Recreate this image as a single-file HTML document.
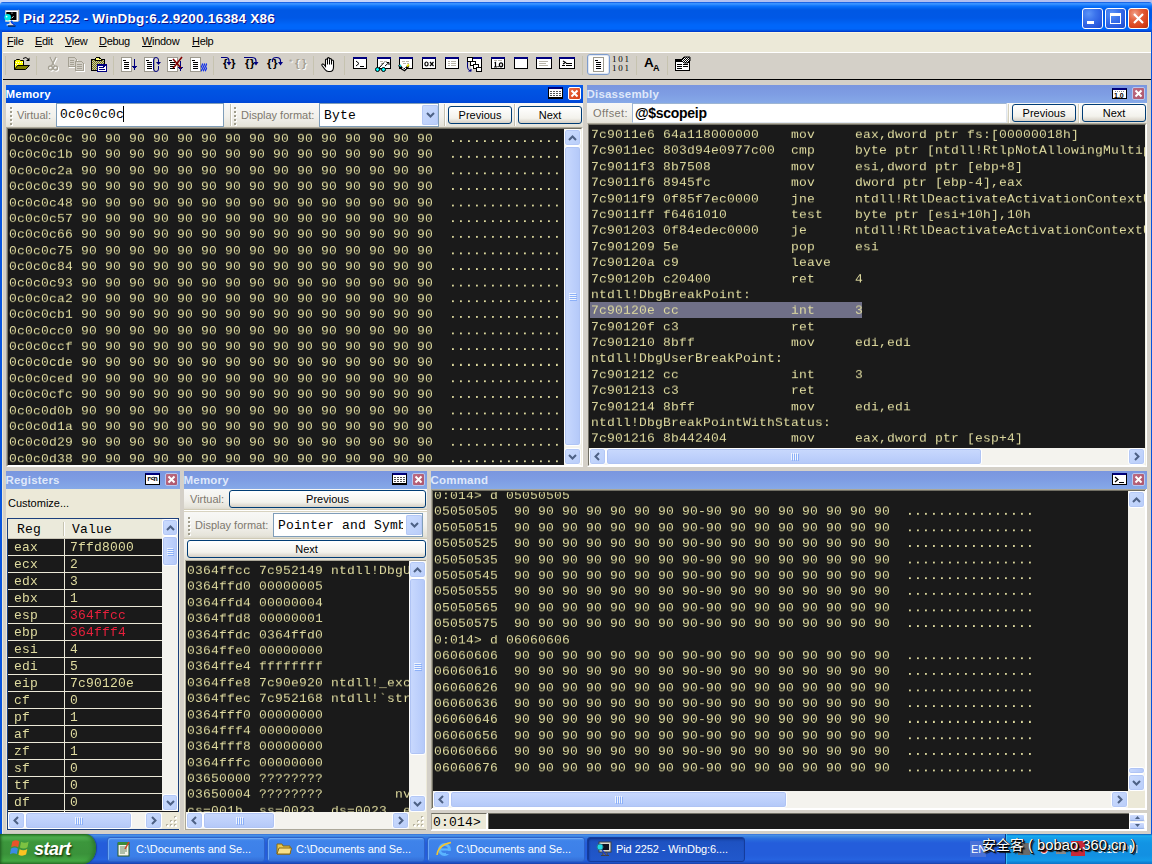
<!DOCTYPE html>
<html lang="en"><head><meta charset="utf-8"><title>Pid 2252 - WinDbg:6.2.9200.16384 X86</title>
<style>
*{box-sizing:border-box}
html,body{margin:0;padding:0}
body{width:1152px;height:864px;overflow:hidden;background:#ece9d8;position:relative;font-family:"Liberation Sans",sans-serif;font-size:11px;color:#000}
.abs{position:absolute}
.mono{font-family:"Liberation Mono",monospace;font-size:13px;line-height:17.3913px;white-space:pre;color:#e0dca0;letter-spacing:0.2px;transform:scaleY(0.92);transform-origin:0 0}
.dark{position:absolute;background:#1a1a1a;overflow:hidden}
.dark .t{position:absolute;left:0;top:0;will-change:transform}
.ptitle{position:absolute;height:18px;color:#fff;font-weight:bold;font-size:11.5px;line-height:18px;white-space:nowrap;letter-spacing:0.2px}
.ptitle.act{background:linear-gradient(#0a5cec,#0054e3 30%,#004ee0 80%,#0046d4)}
.ptitle.in{background:linear-gradient(#7a96df,#7e9de3 50%,#86a9e8);color:#dfe8fa}
.ptitle span{position:absolute;left:-0.5px;top:0}
.lbl{position:absolute;color:#7d786e;font-size:11px;line-height:14px;white-space:nowrap}
.btn{position:absolute;border:1px solid #003c74;border-radius:3px;background:linear-gradient(#fff,#f3f2ec 70%,#d6d0c5);text-align:center;font-size:11px;white-space:nowrap;color:#000}
.inp{position:absolute;border:1px solid #7f9db9;background:#fff}
.sb{position:absolute;background:#f4f3ee}
.sbb{position:absolute;width:17px;height:17px;border:1px solid #fff;border-radius:3px;background:linear-gradient(135deg,#cbdcfe,#b9cdf9);box-shadow:inset 0 0 0 1px #b4c8f6}
.sbt{position:absolute;border:1px solid #fff;border-radius:3px;background:linear-gradient(90deg,#c9d9fd,#bccffb 60%,#b3c8f8);box-shadow:inset 0 0 0 1px #b0c4f4}
.sbt.h{background:linear-gradient(#c9d9fd,#bccffb 60%,#b3c8f8)}
svg{position:absolute;overflow:visible}
.grip{position:absolute;left:0;top:0;width:2px;height:100%;}
</style></head>
<body>
<div class="abs" style="left:0;top:0;width:1152px;height:10px;background:linear-gradient(90deg,#ccd8fa,#c4d2f8 40%,#aebcee 70%,#b4c0f0)"></div>
<div class="abs" id="titlebar" style="left:0;top:2px;width:1152px;height:30px;border-radius:3px 3px 0 0;background:linear-gradient(#0a50dc 0,#3a93ff 1.500px,#2f8bff 2.500px,#0c74fc 4px,#0264f0 6px,#0058e4 8px,#0058e6 16px,#005eee 19px,#0066fa 23px,#0066fa 27px,#0052e2 28.500px,#0032c4 30px)"></div>
<div class="abs" style="left:23px;top:9px;font-size:13.5px;font-weight:bold;color:#fff;line-height:20px;white-space:nowrap;text-shadow:1px 1px #0f1089;letter-spacing:0.23px" id="wtitle">Pid 2252 - WinDbg:6.2.9200.16384 X86</div>
<svg width="18" height="18" style="left:3px;top:9px" viewBox="0 0 18 18"><path d="M2.500 1.500H15L16 1V11.500L15 12.500H2.500Z" fill="#fff" stroke="#d8d0c0" stroke-width="0.600"/><path d="M15 1.500L16 1V11.500L15 12.500Z" fill="#b8b0a0"/><rect x="3.300" y="3" width="10.200" height="8" fill="#000"/><rect x="8.500" y="3.600" width="1" height="1" fill="#fff"/><path d="M8.500 9.300L10.500 7.300" stroke="#fff" stroke-width="1"/><path d="M6.500 12.500H8.500V14.500L12 15.500V16.500H3.500V15.500L6.500 14.500Z" fill="#e8e4dc"/><path d="M5 17H12.500" stroke="#000" stroke-width="1"/><circle cx="4.700" cy="8.200" r="3.300" fill="#00e8e8"/><circle cx="3.600" cy="7.600" r="0.900" fill="#fff"/><path d="M8 12L12 16" stroke="#0020e0" stroke-width="1.800"/><path d="M8.300 11.700L12.300 15.700" stroke="#20d8f0" stroke-width="0.700"/></svg>
<div class="abs" style="left:1082px;top:8px;width:21px;height:21px;border:1px solid #fff;border-radius:3px;background:radial-gradient(circle at 30% 25%,#5c94f8 0,#3c74ec 35%,#2a5ce0 70%,#1c48c8 100%)"><div class="abs" style="left:4px;top:12px;width:7px;height:3px;background:#fff"></div></div>
<div class="abs" style="left:1105px;top:8px;width:21px;height:21px;border:1px solid #fff;border-radius:3px;background:radial-gradient(circle at 30% 25%,#5c94f8 0,#3c74ec 35%,#2a5ce0 70%,#1c48c8 100%)"><div class="abs" style="left:4px;top:4px;width:11px;height:11px;border:1px solid #fff;border-top-width:3px"></div></div>
<div class="abs" style="left:1128px;top:8px;width:21px;height:21px;border:1px solid #fff;border-radius:3px;background:radial-gradient(circle at 30% 25%,#f0a088 0,#e4603c 35%,#d8421c 70%,#b8300c 100%)"><svg width="11" height="11" style="left:4px;top:4px" viewBox="0 0 11 11"><path d="M1 1L10 10M10 1L1 10" stroke="#fff" stroke-width="2.2" fill="none"/></svg></div>
<div class="abs" style="left:0;top:30px;width:2px;height:804px;background:#0855dd"></div>
<div class="abs" style="left:1151px;top:30px;width:1px;height:804px;background:#0855dd"></div>
<div class="abs" style="left:2px;top:32px;width:1149px;height:20px;background:#ece9d8;border-top:1px solid #fdf6de"></div>
<div class="abs" style="left:7px;top:34px;font-size:11px;line-height:14px;white-space:nowrap;letter-spacing:-0.3px"><u>F</u>ile</div>
<div class="abs" style="left:35px;top:34px;font-size:11px;line-height:14px;white-space:nowrap;letter-spacing:-0.3px"><u>E</u>dit</div>
<div class="abs" style="left:65px;top:34px;font-size:11px;line-height:14px;white-space:nowrap;letter-spacing:-0.3px"><u>V</u>iew</div>
<div class="abs" style="left:99px;top:34px;font-size:11px;line-height:14px;white-space:nowrap;letter-spacing:-0.3px"><u>D</u>ebug</div>
<div class="abs" style="left:142px;top:34px;font-size:11px;line-height:14px;white-space:nowrap;letter-spacing:-0.3px"><u>W</u>indow</div>
<div class="abs" style="left:192px;top:34px;font-size:11px;line-height:14px;white-space:nowrap;letter-spacing:-0.3px"><u>H</u>elp</div>
<div class="abs" style="left:2px;top:52px;width:1149px;height:1px;background:#fff"></div>
<div class="abs" style="left:2px;top:53px;width:1149px;height:26px;background:#d4d0c8"></div>
<div class="abs" style="left:2px;top:79px;width:1149px;height:1px;background:#000"></div>
<div class="abs" style="left:5px;top:56px;width:1px;height:19px;background:#c6c3b0"></div>
<svg width="18" height="15" style="left:13px;top:56px" viewBox="0 0 18 15"><path d="M1.500 13.500V4.500H2.500L3.500 3.500H6.500L7.500 4.500H10.500V9" fill="#ffff00" stroke="#000" stroke-width="1"/><path d="M3 6.500H10M2 8.500H5" stroke="#fff" stroke-dasharray="1 1"/><path d="M1.500 13.500L4.500 9.500H16.500L12.500 13.500Z" fill="#808000" stroke="#000" stroke-width="1"/><path d="M10 2.500Q13 0 15.500 3.500" fill="none" stroke="#000" stroke-width="1"/><path d="M16.500 1.500V5H13Z" fill="#000"/></svg>
<div class="abs" style="left:36px;top:56px;width:1px;height:19px;background:#c6c3b0"></div>
<svg width="13" height="15" style="left:47px;top:57px" viewBox="0 0 13 15"><g fill="none" stroke="#fff" stroke-width="1.3" transform="translate(1,1)"><path d="M3 0L7.5 9M9 0L4.5 9"/><circle cx="3.5" cy="11" r="2"/><circle cx="8.5" cy="11" r="2"/></g><g fill="none" stroke="#a5a194" stroke-width="1.3"><path d="M3 0L7.5 9M9 0L4.5 9"/><circle cx="3.5" cy="11" r="2"/><circle cx="8.5" cy="11" r="2"/></g></svg>
<svg width="18" height="16" style="left:68px;top:57px" viewBox="0 0 18 16" shape-rendering="crispEdges"><g transform="translate(1,1)" fill="none" stroke="#fff"><path d="M0.5 0.5H6.5L8.5 2.5V9.5H0.5Z"/><path d="M7.5 4.5H13.5L15.5 6.5V13.5H7.5Z"/></g><g fill="#d4d0c8" stroke="#a5a194"><path d="M0.5 0.5H6.5L8.5 2.5V9.5H0.5Z"/><path d="M7.5 4.5H13.5L15.5 6.5V13.5H7.5Z"/><path d="M2 3.5H6M2 5.5H6M2 7.5H6M9 7.5H14M9 9.5H14M9 11.5H14" fill="none"/></g></svg>
<svg width="17" height="16" style="left:91px;top:56px" viewBox="0 0 17 16" shape-rendering="crispEdges"><rect x="0.500" y="3.500" width="13" height="11" fill="#808000" stroke="#000"/><rect x="1" y="4" width="12" height="10" fill="url(#chk)"/><path d="M4 4.500V3L6 1.500H8L10 3V4.500Z" fill="#ffff80" stroke="#000" stroke-width="1"/><rect x="6.500" y="8.500" width="9" height="7" fill="#fff" stroke="#000080" stroke-width="1"/><rect x="6" y="8" width="10" height="1.500" fill="#000080"/><path d="M8 11.500H13M8 13.500H14" stroke="#000080"/><rect x="12" y="9" width="2" height="2" fill="#000080"/></svg>
<div class="abs" style="left:113px;top:56px;width:1px;height:19px;background:#c6c3b0"></div>
<svg width="17" height="15" style="left:121px;top:57px" viewBox="0 0 17 15" shape-rendering="crispEdges"><rect x="0.5" y="0.5" width="10" height="14" fill="#fff" stroke="#9d9a8f"/><path d="M2 3.5H5M3 5.5H8M3 7.5H8M3 9.5H8M3 11.5H8" stroke="#000" stroke-width="1"/><path d="M13.5 2V12" stroke="#000080" stroke-width="1"/><path d="M11 9H16L13.5 13Z" fill="#000080"/></svg>
<svg width="18" height="17" style="left:144px;top:56px" viewBox="0 0 18 17" shape-rendering="crispEdges"><g transform="translate(0,1)"><rect x="0.5" y="0.5" width="10" height="14" fill="#fff" stroke="#9d9a8f"/><path d="M2 3.5H5M3 5.5H8M3 7.5H8M3 9.5H8M3 11.5H8" stroke="#000" stroke-width="1"/></g><g shape-rendering="auto"><path d="M12 1.500Q14.500 1.500 14.500 4V6M14.500 10V13Q14.500 15.500 12 15.500Q9.500 15.500 9.500 13V4Q9.500 1.500 12 1.500" fill="none" stroke="#000080" stroke-width="1"/><path d="M12 6H17L14.500 9Z" fill="#000080"/></g></svg>
<svg width="18" height="16" style="left:167px;top:56px" viewBox="0 0 18 16" shape-rendering="crispEdges"><g transform="translate(0,1)"><rect x="0.5" y="0.5" width="10" height="14" fill="#fff" stroke="#9d9a8f"/><path d="M2 3.5H5M3 5.5H8M3 7.5H8M3 9.5H8M3 11.5H8" stroke="#000" stroke-width="1"/></g><path d="M13.5 5V12" stroke="#000080"/><path d="M11 11H16L13.500 15Z" fill="#000080"/><path d="M6 3L14 12M15 1L8 10L6 12" fill="none" stroke="#800000" stroke-width="1.600" shape-rendering="auto"/></svg>
<svg width="18" height="15" style="left:190px;top:57px" viewBox="0 0 18 15" shape-rendering="crispEdges"><rect x="0.5" y="0.5" width="10" height="14" fill="#fff" stroke="#9d9a8f"/><path d="M2 3.5H5M3 5.5H8M3 7.5H8M3 9.5H8M3 11.5H8" stroke="#000" stroke-width="1"/><g fill="none" stroke="#1030e8" stroke-width="1.300" shape-rendering="auto"><path d="M12 6.500q1 1 0 2t0 2t0 2t0 1.500"/><path d="M14 6.500q1 1 0 2t0 2t0 2t0 1.500"/><path d="M16 6.500q1 1 0 2t0 2t0 2t0 1.500"/></g></svg>
<div class="abs" style="left:213px;top:56px;width:1px;height:19px;background:#c6c3b0"></div>
<div class="abs" style="left:223px;top:57px;font-family:'Liberation Sans',sans-serif;font-weight:bold;font-size:11.5px;line-height:13px;color:#000">{</div><div class="abs" style="left:231px;top:57px;font-family:'Liberation Sans',sans-serif;font-weight:bold;font-size:11.5px;line-height:13px;color:#000">}</div>
<svg width="14" height="12" style="left:220px;top:56px" viewBox="0 0 14 12"><path d="M1 1.500H6Q9 1.500 9 5V8" fill="none" stroke="#000080" stroke-width="1.2"/><path d="M6.5 6H11.5L9 9.500Z" fill="#000080"/></svg>
<div class="abs" style="left:245px;top:57px;font-family:'Liberation Sans',sans-serif;font-weight:bold;font-size:11.5px;line-height:13px;color:#000">{</div><div class="abs" style="left:250px;top:57px;font-family:'Liberation Sans',sans-serif;font-weight:bold;font-size:11.5px;line-height:13px;color:#000">}</div>
<svg width="18" height="12" style="left:243px;top:56px" viewBox="0 0 18 12"><path d="M1 1.500H9Q13 1.500 13 5V8" fill="none" stroke="#000080" stroke-width="1.2"/><path d="M10.5 6H15.5L13 9.500Z" fill="#000080"/></svg>
<div class="abs" style="left:267px;top:57px;font-family:'Liberation Sans',sans-serif;font-weight:bold;font-size:11.5px;line-height:13px;color:#000">{</div><div class="abs" style="left:273px;top:57px;font-family:'Liberation Sans',sans-serif;font-weight:bold;font-size:11.5px;line-height:13px;color:#000">}</div>
<svg width="16" height="12" style="left:268px;top:56px" viewBox="0 0 16 12"><path d="M4.500 6V4.500Q4.500 1.500 8.500 1.500Q12.500 1.500 12.500 5V8" fill="none" stroke="#000080" stroke-width="1.2"/><path d="M10 6H15L12.500 9.500Z" fill="#000080"/></svg>
<div class="abs" style="left:290px;top:58px;font-size:9px;line-height:10px;color:#fff">*</div><div class="abs" style="left:289px;top:57px;font-size:9px;line-height:10px;color:#a5a194">*</div><div class="abs" style="left:296px;top:58px;font-family:'Liberation Sans',sans-serif;font-weight:bold;font-size:11.5px;line-height:13px;color:#fff">{</div><div class="abs" style="left:303px;top:58px;font-family:'Liberation Sans',sans-serif;font-weight:bold;font-size:11.5px;line-height:13px;color:#fff">}</div><div class="abs" style="left:295px;top:57px;font-family:'Liberation Sans',sans-serif;font-weight:bold;font-size:11.5px;line-height:13px;color:#a5a194">{</div><div class="abs" style="left:302px;top:57px;font-family:'Liberation Sans',sans-serif;font-weight:bold;font-size:11.5px;line-height:13px;color:#a5a194">}</div>
<div class="abs" style="left:313px;top:56px;width:1px;height:19px;background:#c6c3b0"></div>
<svg width="16" height="16" style="left:321px;top:57px" viewBox="0 0 16 16"><path d="M4.500 9.500V3.200Q4.500 2 5.500 2Q6.500 2 6.500 3.200V1.700Q6.500 0.600 7.500 0.600Q8.500 0.600 8.500 1.700V2.600Q8.500 1.600 9.500 1.600Q10.500 1.600 10.500 2.700V4Q10.500 3 11.500 3Q12.500 3 12.500 4.200V10Q12.500 14.500 9 14.500H7.500Q5.500 14.500 4 12.500L1 8.500Q0.500 7.500 1.500 7Q2.500 6.800 3.200 7.800Z" fill="#fff" stroke="#000" stroke-width="1.1"/><path d="M6.500 3V7.500M8.500 2.500V7.500M10.500 4V7.500" stroke="#000" stroke-width="1" fill="none"/></svg>
<div class="abs" style="left:344px;top:56px;width:1px;height:19px;background:#c6c3b0"></div>
<svg width="18" height="18" style="left:353px;top:57px" viewBox="0 0 18 18" shape-rendering="crispEdges"><rect x="0" y="0" width="14" height="12" fill="#000"/><rect x="1" y="2" width="12" height="9" fill="#fff"/><rect x="0" y="0" width="14" height="2" fill="#000080"/><path d="M3 4L6 6.5L3 9" fill="none" stroke="#000" stroke-width="1" shape-rendering="auto"/><path d="M7 9.500H11" stroke="#000"/></svg>
<svg width="18" height="18" style="left:377px;top:57px" viewBox="0 0 18 18" shape-rendering="crispEdges"><rect x="0" y="0" width="14" height="12" fill="#000"/><rect x="1" y="2" width="12" height="9" fill="#fff"/><rect x="0" y="0" width="14" height="2" fill="#000080"/><path d="M3 4.500H6M7 4.500H10M4 6.500H7" stroke="#b8b4a8"/><path d="M2 11L7 5.500M8 9L12 5.500M12 5.500V8M12 5.500H9.5" fill="none" stroke="#000" shape-rendering="auto"/><g shape-rendering="auto"><circle cx="0.500" cy="12.500" r="2" fill="#00ffff" stroke="#000"/><circle cx="6.500" cy="12.500" r="2" fill="#00ffff" stroke="#000"/><path d="M2.500 12H4.500" stroke="#000"/></g></svg>
<svg width="18" height="18" style="left:399px;top:57px" viewBox="0 0 18 18" shape-rendering="crispEdges"><rect x="0" y="0" width="14" height="12" fill="#000"/><rect x="1" y="2" width="12" height="9" fill="#fff"/><rect x="0" y="0" width="14" height="2" fill="#000080"/><path d="M3 4.500H6M7 4.500H10M4 6.500H7M8 6.500H10" stroke="#b8b4a8"/><g shape-rendering="auto"><path d="M0 8L3 11.500L5.500 13L9.500 9" fill="none" stroke="#000" stroke-width="2.4"/><path d="M0.500 8L2 9.5" stroke="#00e0e0" stroke-width="1.600"/><path d="M8 9.500L10 7.500" stroke="#e8e000" stroke-width="1.800"/><path d="M3 11L5.500 12.500L7 11" stroke="#fff" stroke-width="1" fill="none"/></g></svg>
<svg width="18" height="18" style="left:422px;top:57px" viewBox="0 0 18 18" shape-rendering="crispEdges"><rect x="0" y="0" width="14" height="12" fill="#000"/><rect x="1" y="2" width="12" height="9" fill="#fff"/><rect x="0" y="0" width="14" height="2" fill="#000080"/><g shape-rendering="auto" fill="none" stroke="#000" stroke-width="1.2"><ellipse cx="4.500" cy="7" rx="1.600" ry="2"/><path d="M8 5L11.500 9M11.500 5L8 9"/></g></svg>
<svg width="18" height="18" style="left:445px;top:57px" viewBox="0 0 18 18" shape-rendering="crispEdges"><rect x="0" y="0" width="14" height="12" fill="#000"/><rect x="1" y="2" width="12" height="9" fill="#fff"/><rect x="0" y="0" width="14" height="2" fill="#000080"/><path d="M3 4.500H11M3 6.500H11M3 8.500H11" stroke="#b8b4a8"/><path d="M5.500 4V9" stroke="#fff"/></svg>
<svg width="18" height="17" style="left:466px;top:56px" viewBox="0 0 18 17" shape-rendering="crispEdges"><rect x="5" y="1" width="11" height="2" fill="#000080"/><rect x="5" y="3" width="11" height="10" fill="#fff"/><path d="M15.500 3V12" stroke="#000"/><rect x="1.500" y="1.500" width="5" height="4" fill="#fff" stroke="#000"/><rect x="4.500" y="5.500" width="5" height="4" fill="#fff" stroke="#000"/><rect x="7.500" y="8.500" width="5" height="4" fill="#fff" stroke="#000"/><rect x="10.500" y="11.500" width="5" height="4" fill="#fff" stroke="#000"/><path d="M1.500 6V11Q1.500 14 4.500 15" fill="none" stroke="#000080" shape-rendering="auto"/><path d="M2 15.500H5.500V12.500Z" fill="#000080" shape-rendering="auto"/></svg>
<svg width="18" height="18" style="left:491px;top:57px" viewBox="0 0 18 18" shape-rendering="crispEdges"><rect x="0" y="0" width="14" height="12" fill="#000"/><rect x="1" y="2" width="12" height="9" fill="#fff"/><rect x="0" y="0" width="14" height="2" fill="#000080"/><path d="M3 3.500H6M7 3.500H11" stroke="#b8b4a8"/><g shape-rendering="auto"><path d="M3.500 6L4.500 5.500V10M3 10H6" stroke="#000" stroke-width="1.200" fill="none"/><rect x="6.500" y="9" width="1.200" height="1.200" fill="#000"/><ellipse cx="10" cy="7.800" rx="1.600" ry="2" fill="none" stroke="#000" stroke-width="1.300"/></g></svg>
<svg width="18" height="18" style="left:514px;top:57px" viewBox="0 0 18 18" shape-rendering="crispEdges"><rect x="0" y="0" width="14" height="12" fill="#000"/><rect x="1" y="2" width="12" height="9" fill="#fff"/><rect x="0" y="0" width="14" height="2" fill="#000080"/></svg>
<svg width="20" height="18" style="left:536px;top:57px" viewBox="0 0 20 18" shape-rendering="crispEdges"><rect x="0" y="0" width="16" height="12" fill="#000"/><rect x="1" y="2" width="14" height="9" fill="#fff"/><rect x="0" y="0" width="16" height="2" fill="#000080"/><path d="M3 4.500H12M3 6.500H10M3 8.500H12" stroke="#b8b4a8"/></svg>
<svg width="20" height="18" style="left:559px;top:57px" viewBox="0 0 20 18" shape-rendering="crispEdges"><rect x="0" y="0" width="16" height="12" fill="#000"/><rect x="1" y="2" width="14" height="9" fill="#fff"/><rect x="0" y="0" width="16" height="2" fill="#000080"/><path d="M4 4L6.500 5.500L4 7" fill="none" stroke="#000" stroke-width="1.2" shape-rendering="auto"/><path d="M7 6.500H13M3 8.500H6M7 8.500H13" stroke="#000"/></svg>
<div class="abs" style="left:582px;top:56px;width:1px;height:19px;background:#c6c3b0"></div>
<div class="abs" style="left:587px;top:54px;width:23px;height:21px;background:#fdfdfb;border:1px solid #7d9ccc;border-radius:3px;box-shadow:inset 0 0 0 1px #dfe6f3"></div>
<svg width="11" height="15" style="left:593px;top:57px" viewBox="0 0 11 15" shape-rendering="crispEdges"><rect x="0.500" y="0.500" width="10" height="14" fill="#fff" stroke="#9d9a8f"/><path d="M2 3.500H5M3 5.500H8M3 7.500H8M3 9.500H8M3 11.500H8" stroke="#000"/></svg>
<div class="abs" style="left:612px;top:55px;font-family:'Liberation Serif',serif;font-size:9px;line-height:9px;letter-spacing:1.7px;color:#000;white-space:pre">101
101</div>
<div class="abs" style="left:636px;top:56px;width:1px;height:19px;background:#c6c3b0"></div>
<div class="abs" style="left:644px;top:55px;font-size:13.5px;line-height:16px;font-weight:bold;color:#000">A</div><div class="abs" style="left:653px;top:63px;font-size:9px;line-height:11px;font-weight:bold;color:#000">A</div>
<div class="abs" style="left:667px;top:56px;width:1px;height:19px;background:#c6c3b0"></div>
<svg width="17" height="16" style="left:675px;top:56px" viewBox="0 0 17 16" shape-rendering="crispEdges"><rect x="0.500" y="3.500" width="14" height="11" fill="#fff" stroke="#000"/><rect x="1" y="4" width="6" height="2" fill="#000"/><path d="M2 8.500H7M8 8.500H13M2 10.500H7M8 10.500H13M2 12.500H7" stroke="#000"/><path d="M6 4L9 1H15V5L13 7H9Z" fill="url(#chk2)" stroke="#000" shape-rendering="auto"/></svg>
<svg width="0" height="0" style="left:0;top:0"><defs><pattern id="chk" width="2" height="2" patternUnits="userSpaceOnUse"><rect width="2" height="2" fill="#808000"/><rect width="1" height="1" fill="#c0c0c0"/><rect x="1" y="1" width="1" height="1" fill="#c0c0c0"/></pattern><pattern id="chk2" width="2" height="2" patternUnits="userSpaceOnUse"><rect width="2" height="2" fill="#fff"/><rect width="1" height="1" fill="#000"/><rect x="1" y="1" width="1" height="1" fill="#000"/></pattern></defs></svg>
<div class="abs" style="left:2px;top:80px;width:1149px;height:754px;background:#d4d0c8"></div><div class="abs" style="left:2px;top:32px;width:1px;height:802px;background:#ece9d8"></div>
<div class="abs" style="left:6px;top:85px;width:577px;height:382px;background:#ece9d8"></div><div class="abs" style="left:6px;top:103px;width:577px;height:25px;background:linear-gradient(#f8f8f6,#f1f0eb 55%,#e6e4da 90%,#dcd9cd)"></div>
<div class="ptitle act" style="left:6px;top:85px;width:577px;height:18px"><span>Memory</span></div>
<div class="abs" style="left:548px;top:87px;width:15px;height:12px;background:#fff;border:1px solid #000;border-top:2px solid #00007b"><svg width="13" height="9" style="left:0;top:0" viewBox="0 0 13 9" shape-rendering="crispEdges"><path d="M1 2.500H12M1 4.500H12M1 6.500H12" stroke="#555" stroke-width="1" fill="none"/><path d="M3.500 1V8M6.500 1V8M9.500 1V8" stroke="#fff" stroke-width="1" fill="none"/><path d="M0 8.500H13" stroke="#000"/></svg></div>
<div class="abs" style="left:568px;top:87px;width:13px;height:13px;background:linear-gradient(135deg,#ea6a42,#d63c14);border:1px solid #fff;border-radius:2px"><svg width="7" height="7" style="left:2px;top:2px" viewBox="0 0 7 7"><path d="M0.5 0.5 L6.5 6.5 M6.5 0.5 L0.5 6.5" stroke="#fff" stroke-width="2" fill="none"/></svg></div>
<div class="abs" style="left:11px;top:108px;width:2px;height:2px;background:#fff"></div><div class="abs" style="left:10px;top:107px;width:2px;height:2px;background:#a09d8c"></div><div class="abs" style="left:11px;top:112px;width:2px;height:2px;background:#fff"></div><div class="abs" style="left:10px;top:111px;width:2px;height:2px;background:#a09d8c"></div><div class="abs" style="left:11px;top:116px;width:2px;height:2px;background:#fff"></div><div class="abs" style="left:10px;top:115px;width:2px;height:2px;background:#a09d8c"></div><div class="abs" style="left:11px;top:120px;width:2px;height:2px;background:#fff"></div><div class="abs" style="left:10px;top:119px;width:2px;height:2px;background:#a09d8c"></div><div class="abs" style="left:11px;top:124px;width:2px;height:2px;background:#fff"></div><div class="abs" style="left:10px;top:123px;width:2px;height:2px;background:#a09d8c"></div>
<div class="lbl" style="left:17px;top:108px">Virtual:</div>
<div class="inp" style="left:56px;top:103px;width:168px;height:24px"><div class="mono" style="position:absolute;left:3px;top:3px;color:#000">0c0c0c0c</div><div class="abs" style="left:66px;top:2px;width:1px;height:16px;background:#000"></div></div>
<div class="abs" style="left:230px;top:104px;width:1px;height:22px;background:#c5c2b2"></div><div class="abs" style="left:231px;top:104px;width:1px;height:22px;background:#fff"></div>
<div class="abs" style="left:235px;top:108px;width:2px;height:2px;background:#fff"></div><div class="abs" style="left:234px;top:107px;width:2px;height:2px;background:#a09d8c"></div><div class="abs" style="left:235px;top:112px;width:2px;height:2px;background:#fff"></div><div class="abs" style="left:234px;top:111px;width:2px;height:2px;background:#a09d8c"></div><div class="abs" style="left:235px;top:116px;width:2px;height:2px;background:#fff"></div><div class="abs" style="left:234px;top:115px;width:2px;height:2px;background:#a09d8c"></div><div class="abs" style="left:235px;top:120px;width:2px;height:2px;background:#fff"></div><div class="abs" style="left:234px;top:119px;width:2px;height:2px;background:#a09d8c"></div><div class="abs" style="left:235px;top:124px;width:2px;height:2px;background:#fff"></div><div class="abs" style="left:234px;top:123px;width:2px;height:2px;background:#a09d8c"></div>
<div class="lbl" style="left:241px;top:108px">Display format:</div>
<div class="inp" style="left:319px;top:103px;width:120px;height:24px"><div class="mono" style="position:absolute;left:4px;top:4px;color:#000">Byte</div><div class="sbb" style="left:102px;top:1px;width:16px;height:20px;border:0;border-radius:2px"><svg width="9" height="6" style="left:4px;top:7px" viewBox="0 0 9 6"><path d="M1 1 L4.5 4.5 L8 1" fill="none" stroke="#4d6185" stroke-width="2"/></svg></div></div>
<div class="abs" style="left:444px;top:104px;width:1px;height:22px;background:#c5c2b2"></div><div class="abs" style="left:445px;top:104px;width:1px;height:22px;background:#fff"></div>
<div class="btn" style="left:448px;top:106px;width:64px;height:18px;line-height:16px">Previous</div>
<div class="abs" style="left:514px;top:104px;width:1px;height:22px;background:#c5c2b2"></div><div class="abs" style="left:515px;top:104px;width:1px;height:22px;background:#fff"></div>
<div class="btn" style="left:518px;top:106px;width:64px;height:18px;line-height:16px">Next</div>
<div class="abs" style="left:6px;top:127px;width:577px;height:340px;background:#fff;border:2px solid;border-color:#aca899 #fff #fff #aca899"></div><div class="abs" style="left:7px;top:128px;width:575px;height:338px;border:1px solid;border-color:#716f64 #f1efe2 #fff #716f64"></div>
<div class="dark" style="left:8px;top:129px;width:556px;height:336px"><div class="t mono" style="left:1px;top:2px">0c0c0c0c 90 90 90 90 90 90 90 90 90 90 90 90 90 90 90  <b>..............</b>
0c0c0c1b 90 90 90 90 90 90 90 90 90 90 90 90 90 90 90  <b>..............</b>
0c0c0c2a 90 90 90 90 90 90 90 90 90 90 90 90 90 90 90  <b>..............</b>
0c0c0c39 90 90 90 90 90 90 90 90 90 90 90 90 90 90 90  <b>..............</b>
0c0c0c48 90 90 90 90 90 90 90 90 90 90 90 90 90 90 90  <b>..............</b>
0c0c0c57 90 90 90 90 90 90 90 90 90 90 90 90 90 90 90  <b>..............</b>
0c0c0c66 90 90 90 90 90 90 90 90 90 90 90 90 90 90 90  <b>..............</b>
0c0c0c75 90 90 90 90 90 90 90 90 90 90 90 90 90 90 90  <b>..............</b>
0c0c0c84 90 90 90 90 90 90 90 90 90 90 90 90 90 90 90  <b>..............</b>
0c0c0c93 90 90 90 90 90 90 90 90 90 90 90 90 90 90 90  <b>..............</b>
0c0c0ca2 90 90 90 90 90 90 90 90 90 90 90 90 90 90 90  <b>..............</b>
0c0c0cb1 90 90 90 90 90 90 90 90 90 90 90 90 90 90 90  <b>..............</b>
0c0c0cc0 90 90 90 90 90 90 90 90 90 90 90 90 90 90 90  <b>..............</b>
0c0c0ccf 90 90 90 90 90 90 90 90 90 90 90 90 90 90 90  <b>..............</b>
0c0c0cde 90 90 90 90 90 90 90 90 90 90 90 90 90 90 90  <b>..............</b>
0c0c0ced 90 90 90 90 90 90 90 90 90 90 90 90 90 90 90  <b>..............</b>
0c0c0cfc 90 90 90 90 90 90 90 90 90 90 90 90 90 90 90  <b>..............</b>
0c0c0d0b 90 90 90 90 90 90 90 90 90 90 90 90 90 90 90  <b>..............</b>
0c0c0d1a 90 90 90 90 90 90 90 90 90 90 90 90 90 90 90  <b>..............</b>
0c0c0d29 90 90 90 90 90 90 90 90 90 90 90 90 90 90 90  <b>..............</b>
0c0c0d38 90 90 90 90 90 90 90 90 90 90 90 90 90 90 90  <b>..............</b></div></div>
<div class="sb" style="left:564px;top:129px;width:17px;height:336px"><div class="sbb" style="left:0;top:0;width:17px"><svg width="9" height="6" style="left:3px;top:5px" viewBox="0 0 9 6"><path d="M1 5 L4.5 1.5 L8 5" fill="none" stroke="#4d6185" stroke-width="2"/></svg></div><div class="sbb" style="left:0;top:319px;width:17px"><svg width="9" height="6" style="left:3px;top:5px" viewBox="0 0 9 6"><path d="M1 1 L4.5 4.5 L8 1" fill="none" stroke="#4d6185" stroke-width="2"/></svg></div><div class="sbt" style="left:0;top:17px;width:17px;height:300px"><div class="abs" style="left:4px;top:146px;width:7px;height:1px;background:#eef4fe"></div><div class="abs" style="left:5px;top:147px;width:7px;height:1px;background:#8cb0f8"></div><div class="abs" style="left:4px;top:148px;width:7px;height:1px;background:#eef4fe"></div><div class="abs" style="left:5px;top:149px;width:7px;height:1px;background:#8cb0f8"></div><div class="abs" style="left:4px;top:150px;width:7px;height:1px;background:#eef4fe"></div><div class="abs" style="left:5px;top:151px;width:7px;height:1px;background:#8cb0f8"></div><div class="abs" style="left:4px;top:152px;width:7px;height:1px;background:#eef4fe"></div><div class="abs" style="left:5px;top:153px;width:7px;height:1px;background:#8cb0f8"></div></div></div>
<div class="abs" style="left:587px;top:85px;width:560px;height:382px;background:#ece9d8"></div><div class="abs" style="left:587px;top:103px;width:560px;height:21px;background:linear-gradient(#f8f8f6,#f1f0eb 55%,#e6e4da 90%,#dcd9cd)"></div>
<div class="ptitle in" style="left:587px;top:85px;width:560px;height:18px"><span>Disassembly</span></div>
<div class="abs" style="left:1112px;top:88px;width:15px;height:11px;background:#fff;border:1px solid #000;border-top:2px solid #00007b"><div class="abs" style="left:2px;top:1px;width:9px;height:1px;background:repeating-linear-gradient(90deg,#888 0 1px,#fff 1px 2px)"></div><div class="abs" style="left:1px;top:2px;font-size:7px;line-height:7px;font-weight:bold;font-family:'Liberation Sans',sans-serif;letter-spacing:0px;color:#000">1.0</div></div>
<div class="abs" style="left:1132px;top:87px;width:13px;height:13px;background:linear-gradient(135deg,#bd6a80,#ad566c);border:1px solid #b9c6ee;border-radius:2px"><svg width="7" height="7" style="left:2px;top:2px" viewBox="0 0 7 7"><path d="M0.5 0.5 L6.5 6.5 M6.5 0.5 L0.5 6.5" stroke="#fff" stroke-width="2" fill="none"/></svg></div>
<div class="lbl" style="left:593px;top:106px;letter-spacing:0.4px">Offset:</div>
<div class="inp" style="left:632px;top:103px;width:375px;height:20px;border-color:#9db5d3 #dfe6ef #dfe6ef #9db5d3"><div class="abs" style="left:2px;top:0px;font-size:14px;font-weight:bold;line-height:18px;white-space:nowrap;letter-spacing:-0.3px">@$scopeip</div></div>
<div class="abs" style="left:1008px;top:104px;width:1px;height:19px;background:#d5d1bd"></div><div class="abs" style="left:1009px;top:104px;width:1px;height:19px;background:#fff"></div><div class="btn" style="left:1012px;top:104px;width:64px;height:18px;line-height:17px">Previous</div>
<div class="abs" style="left:1078px;top:104px;width:1px;height:19px;background:#d5d1bd"></div><div class="abs" style="left:1079px;top:104px;width:1px;height:19px;background:#fff"></div><div class="btn" style="left:1082px;top:104px;width:64px;height:18px;line-height:17px">Next</div>
<div class="abs" style="left:587px;top:123px;width:560px;height:344px;background:#fff;border:1px solid;border-color:#aca899 #fff #fff #d4d0c8"></div><div class="abs" style="left:588px;top:124px;width:558px;height:342px;border:1px solid;border-color:#716f64 #f1efe2 #fff #716f64"></div>
<div class="dark" style="left:589px;top:125px;width:556px;height:323px"><div class="abs" style="left:1px;top:177px;width:272px;height:16px;background:#6f6f87"></div><div class="t mono" style="left:2px;top:2px">7c9011e6 64a118000000    mov     eax,dword ptr fs:[00000018h]
7c9011ec 803d94e0977c00  cmp     byte ptr [ntdll!RtlpNotAllowingMultipleActivation (7c97e094)],0
7c9011f3 8b7508          mov     esi,dword ptr [ebp+8]
7c9011f6 8945fc          mov     dword ptr [ebp-4],eax
7c9011f9 0f85f7ec0000    jne     ntdll!RtlDeactivateActivationContextUnsafeFast+0x88 (7c90fef6)
7c9011ff f6461010        test    byte ptr [esi+10h],10h
7c901203 0f84edec0000    je      ntdll!RtlDeactivateActivationContextUnsafeFast+0x8d (7c90fef6)
7c901209 5e              pop     esi
7c90120a c9              leave
7c90120b c20400          ret     4
ntdll!DbgBreakPoint:
7c90120e cc              int     3
7c90120f c3              ret
7c901210 8bff            mov     edi,edi
ntdll!DbgUserBreakPoint:
7c901212 cc              int     3
7c901213 c3              ret
7c901214 8bff            mov     edi,edi
ntdll!DbgBreakPointWithStatus:
7c901216 8b442404        mov     eax,dword ptr [esp+4]</div></div>
<div class="sb" style="left:589px;top:448px;width:556px;height:17px"><div class="sbb" style="left:0;top:0;height:17px"><svg width="6" height="9" style="left:4px;top:3px" viewBox="0 0 6 9"><path d="M5 1 L1.5 4.5 L5 8" fill="none" stroke="#4d6185" stroke-width="2"/></svg></div><div class="sbb" style="left:539px;top:0;height:17px"><svg width="6" height="9" style="left:5px;top:3px" viewBox="0 0 6 9"><path d="M1 1 L4.5 4.5 L1 8" fill="none" stroke="#4d6185" stroke-width="2"/></svg></div><div class="sbt h" style="left:17px;top:0;width:376px;height:17px"><div class="abs" style="top:4px;left:184px;height:7px;width:1px;background:#eef4fe"></div><div class="abs" style="top:5px;left:185px;height:7px;width:1px;background:#8cb0f8"></div><div class="abs" style="top:4px;left:186px;height:7px;width:1px;background:#eef4fe"></div><div class="abs" style="top:5px;left:187px;height:7px;width:1px;background:#8cb0f8"></div><div class="abs" style="top:4px;left:188px;height:7px;width:1px;background:#eef4fe"></div><div class="abs" style="top:5px;left:189px;height:7px;width:1px;background:#8cb0f8"></div><div class="abs" style="top:4px;left:190px;height:7px;width:1px;background:#eef4fe"></div><div class="abs" style="top:5px;left:191px;height:7px;width:1px;background:#8cb0f8"></div></div></div>
<div class="abs" style="left:6px;top:471px;width:174px;height:359px;background:#ece9d8"></div>
<div class="ptitle in" style="left:6px;top:471px;width:174px;height:18px"><span>Registers</span></div>
<div class="abs" style="left:145px;top:473px;width:15px;height:12px;background:#fff;border:1px solid #000;border-top:2px solid #00007b"><div class="abs" style="left:1px;top:0px;font-size:7px;line-height:8px;font-weight:bold;font-family:'Liberation Mono',monospace;letter-spacing:-1px">r&lt;n</div></div>
<div class="abs" style="left:165px;top:473px;width:13px;height:13px;background:linear-gradient(135deg,#bd6a80,#ad566c);border:1px solid #b9c6ee;border-radius:2px"><svg width="7" height="7" style="left:2px;top:2px" viewBox="0 0 7 7"><path d="M0.5 0.5 L6.5 6.5 M6.5 0.5 L0.5 6.5" stroke="#fff" stroke-width="2" fill="none"/></svg></div>
<div class="abs" style="left:8px;top:496px;font-size:11px;line-height:14px;white-space:nowrap">Customize...</div>
<div class="abs" style="left:7px;top:518px;width:172px;height:312px;background:#1a1a1a;border:1px solid #1c3f7c"></div>
<div class="abs" style="left:8px;top:519px;width:154px;height:20px;background:#ebeadb;border-bottom:1px solid #cbc7b8"></div>
<div class="abs" style="left:63px;top:522px;width:1px;height:14px;background:#c7c5b2"></div><div class="abs" style="left:64px;top:522px;width:1px;height:14px;background:#fff"></div>
<div class="abs mono" style="left:17px;top:522px;color:#000">Reg</div><div class="abs mono" style="left:72px;top:522px;color:#000">Value</div>
<div class="abs" style="left:8px;top:539px;width:154px;height:273px;overflow:hidden;will-change:transform"><div class="abs mono" style="left:6px;top:1px">eax</div><div class="abs mono" style="left:62px;top:1px">7ffd8000</div><div class="abs" style="left:0;top:16px;width:154px;height:1px;background:#ece9d8"></div><div class="abs mono" style="left:6px;top:18px">ecx</div><div class="abs mono" style="left:62px;top:18px">2</div><div class="abs" style="left:0;top:33px;width:154px;height:1px;background:#ece9d8"></div><div class="abs mono" style="left:6px;top:35px">edx</div><div class="abs mono" style="left:62px;top:35px">3</div><div class="abs" style="left:0;top:50px;width:154px;height:1px;background:#ece9d8"></div><div class="abs mono" style="left:6px;top:52px">ebx</div><div class="abs mono" style="left:62px;top:52px">1</div><div class="abs" style="left:0;top:67px;width:154px;height:1px;background:#ece9d8"></div><div class="abs mono" style="left:6px;top:69px">esp</div><div class="abs mono" style="left:62px;top:69px;color:#e8203c">364ffcc</div><div class="abs" style="left:0;top:84px;width:154px;height:1px;background:#ece9d8"></div><div class="abs mono" style="left:6px;top:86px">ebp</div><div class="abs mono" style="left:62px;top:86px;color:#e8203c">364fff4</div><div class="abs" style="left:0;top:101px;width:154px;height:1px;background:#ece9d8"></div><div class="abs mono" style="left:6px;top:103px">esi</div><div class="abs mono" style="left:62px;top:103px">4</div><div class="abs" style="left:0;top:118px;width:154px;height:1px;background:#ece9d8"></div><div class="abs mono" style="left:6px;top:120px">edi</div><div class="abs mono" style="left:62px;top:120px">5</div><div class="abs" style="left:0;top:135px;width:154px;height:1px;background:#ece9d8"></div><div class="abs mono" style="left:6px;top:137px">eip</div><div class="abs mono" style="left:62px;top:137px">7c90120e</div><div class="abs" style="left:0;top:152px;width:154px;height:1px;background:#ece9d8"></div><div class="abs mono" style="left:6px;top:154px">cf</div><div class="abs mono" style="left:62px;top:154px">0</div><div class="abs" style="left:0;top:169px;width:154px;height:1px;background:#ece9d8"></div><div class="abs mono" style="left:6px;top:171px">pf</div><div class="abs mono" style="left:62px;top:171px">1</div><div class="abs" style="left:0;top:186px;width:154px;height:1px;background:#ece9d8"></div><div class="abs mono" style="left:6px;top:188px">af</div><div class="abs mono" style="left:62px;top:188px">0</div><div class="abs" style="left:0;top:203px;width:154px;height:1px;background:#ece9d8"></div><div class="abs mono" style="left:6px;top:205px">zf</div><div class="abs mono" style="left:62px;top:205px">1</div><div class="abs" style="left:0;top:220px;width:154px;height:1px;background:#ece9d8"></div><div class="abs mono" style="left:6px;top:222px">sf</div><div class="abs mono" style="left:62px;top:222px">0</div><div class="abs" style="left:0;top:237px;width:154px;height:1px;background:#ece9d8"></div><div class="abs mono" style="left:6px;top:239px">tf</div><div class="abs mono" style="left:62px;top:239px">0</div><div class="abs" style="left:0;top:254px;width:154px;height:1px;background:#ece9d8"></div><div class="abs mono" style="left:6px;top:256px">df</div><div class="abs mono" style="left:62px;top:256px">0</div><div class="abs" style="left:0;top:271px;width:154px;height:1px;background:#ece9d8"></div><div class="abs" style="left:56px;top:0;width:1px;height:273px;background:#ece9d8"></div></div>
<div class="sb" style="left:162px;top:519px;width:16px;height:292px"><div class="sbb" style="left:0;top:0;width:16px"><svg width="9" height="6" style="left:3px;top:5px" viewBox="0 0 9 6"><path d="M1 5 L4.5 1.5 L8 5" fill="none" stroke="#4d6185" stroke-width="2"/></svg></div><div class="sbb" style="left:0;top:275px;width:16px"><svg width="9" height="6" style="left:3px;top:5px" viewBox="0 0 9 6"><path d="M1 1 L4.5 4.5 L8 1" fill="none" stroke="#4d6185" stroke-width="2"/></svg></div><div class="sbt" style="left:0;top:17px;width:16px;height:30px"><div class="abs" style="left:4px;top:11px;width:6px;height:1px;background:#eef4fe"></div><div class="abs" style="left:5px;top:12px;width:6px;height:1px;background:#8cb0f8"></div><div class="abs" style="left:4px;top:13px;width:6px;height:1px;background:#eef4fe"></div><div class="abs" style="left:5px;top:14px;width:6px;height:1px;background:#8cb0f8"></div><div class="abs" style="left:4px;top:15px;width:6px;height:1px;background:#eef4fe"></div><div class="abs" style="left:5px;top:16px;width:6px;height:1px;background:#8cb0f8"></div><div class="abs" style="left:4px;top:17px;width:6px;height:1px;background:#eef4fe"></div><div class="abs" style="left:5px;top:18px;width:6px;height:1px;background:#8cb0f8"></div></div></div>
<div class="sb" style="left:8px;top:812px;width:154px;height:17px"><div class="sbb" style="left:0;top:0;height:17px"><svg width="6" height="9" style="left:4px;top:3px" viewBox="0 0 6 9"><path d="M5 1 L1.5 4.5 L5 8" fill="none" stroke="#4d6185" stroke-width="2"/></svg></div><div class="sbb" style="left:137px;top:0;height:17px"><svg width="6" height="9" style="left:5px;top:3px" viewBox="0 0 6 9"><path d="M1 1 L4.5 4.5 L1 8" fill="none" stroke="#4d6185" stroke-width="2"/></svg></div><div class="sbt h" style="left:17px;top:0;width:107px;height:17px"><div class="abs" style="top:4px;left:49px;height:7px;width:1px;background:#eef4fe"></div><div class="abs" style="top:5px;left:50px;height:7px;width:1px;background:#8cb0f8"></div><div class="abs" style="top:4px;left:51px;height:7px;width:1px;background:#eef4fe"></div><div class="abs" style="top:5px;left:52px;height:7px;width:1px;background:#8cb0f8"></div><div class="abs" style="top:4px;left:53px;height:7px;width:1px;background:#eef4fe"></div><div class="abs" style="top:5px;left:54px;height:7px;width:1px;background:#8cb0f8"></div><div class="abs" style="top:4px;left:55px;height:7px;width:1px;background:#eef4fe"></div><div class="abs" style="top:5px;left:56px;height:7px;width:1px;background:#8cb0f8"></div></div></div>
<div class="abs" style="left:162px;top:812px;width:17px;height:17px;background:#ece9d8"></div><svg width="12" height="12" style="left:166px;top:816px" viewBox="0 0 12 12" shape-rendering="crispEdges"><g fill="#b8b4a2"><rect x="8" y="0" width="2" height="2"/><rect x="4" y="4" width="2" height="2"/><rect x="8" y="4" width="2" height="2"/><rect x="0" y="8" width="2" height="2"/><rect x="4" y="8" width="2" height="2"/><rect x="8" y="8" width="2" height="2"/></g><g fill="#fff"><rect x="9" y="1" width="2" height="2"/><rect x="5" y="5" width="2" height="2"/><rect x="9" y="5" width="2" height="2"/><rect x="1" y="9" width="2" height="2"/><rect x="5" y="9" width="2" height="2"/><rect x="9" y="9" width="2" height="2"/></g></svg>
<div class="abs" style="left:184px;top:471px;width:243px;height:359px;background:#ece9d8"></div><div class="abs" style="left:184px;top:489px;width:243px;height:20px;background:linear-gradient(#f8f8f6,#f1f0eb 55%,#e6e4da 90%,#dcd9cd)"></div><div class="abs" style="left:184px;top:512px;width:243px;height:26px;background:linear-gradient(#f8f8f6,#f1f0eb 55%,#e6e4da 90%,#dcd9cd)"></div><div class="abs" style="left:184px;top:539px;width:243px;height:21px;background:linear-gradient(#f8f8f6,#f1f0eb 55%,#e6e4da 90%,#dcd9cd)"></div>
<div class="ptitle in" style="left:184px;top:471px;width:243px;height:18px"><span>Memory</span></div>
<div class="abs" style="left:392px;top:473px;width:15px;height:12px;background:#fff;border:1px solid #000;border-top:2px solid #00007b"><svg width="13" height="9" style="left:0;top:0" viewBox="0 0 13 9" shape-rendering="crispEdges"><path d="M1 2.500H12M1 4.500H12M1 6.500H12" stroke="#555" stroke-width="1" fill="none"/><path d="M3.500 1V8M6.500 1V8M9.500 1V8" stroke="#fff" stroke-width="1" fill="none"/><path d="M0 8.500H13" stroke="#000"/></svg></div>
<div class="abs" style="left:412px;top:473px;width:13px;height:13px;background:linear-gradient(135deg,#bd6a80,#ad566c);border:1px solid #b9c6ee;border-radius:2px"><svg width="7" height="7" style="left:2px;top:2px" viewBox="0 0 7 7"><path d="M0.5 0.5 L6.5 6.5 M6.5 0.5 L0.5 6.5" stroke="#fff" stroke-width="2" fill="none"/></svg></div>
<div class="lbl" style="left:190px;top:492px">Virtual:</div>
<div class="btn" style="left:229px;top:490px;width:197px;height:18px;line-height:17px">Previous</div>
<div class="abs" style="left:184px;top:509px;width:243px;height:1px;background:#d0cbb6"></div><div class="abs" style="left:184px;top:510px;width:243px;height:1px;background:#fff"></div><div class="abs" style="left:184px;top:511px;width:243px;height:1px;background:#d8d3c0"></div><div class="abs" style="left:184px;top:538px;width:243px;height:1px;background:#d0cbb6"></div>
<div class="abs" style="left:189px;top:518px;width:2px;height:2px;background:#fff"></div><div class="abs" style="left:188px;top:517px;width:2px;height:2px;background:#a09d8c"></div><div class="abs" style="left:189px;top:522px;width:2px;height:2px;background:#fff"></div><div class="abs" style="left:188px;top:521px;width:2px;height:2px;background:#a09d8c"></div><div class="abs" style="left:189px;top:526px;width:2px;height:2px;background:#fff"></div><div class="abs" style="left:188px;top:525px;width:2px;height:2px;background:#a09d8c"></div><div class="abs" style="left:189px;top:530px;width:2px;height:2px;background:#fff"></div><div class="abs" style="left:188px;top:529px;width:2px;height:2px;background:#a09d8c"></div><div class="abs" style="left:189px;top:534px;width:2px;height:2px;background:#fff"></div><div class="abs" style="left:188px;top:533px;width:2px;height:2px;background:#a09d8c"></div>
<div class="lbl" style="left:195px;top:518px">Display format:</div>
<div class="inp" style="left:273px;top:513px;width:150px;height:24px;overflow:hidden"><div class="mono" style="position:absolute;left:4px;top:4px;color:#000">Pointer and Symbol</div><div class="abs" style="left:129px;top:1px;width:3px;height:20px;background:#fff"></div><div class="sbb" style="left:132px;top:1px;width:16px;height:20px;border:0;border-radius:2px"><svg width="9" height="6" style="left:4px;top:7px" viewBox="0 0 9 6"><path d="M1 1 L4.5 4.5 L8 1" fill="none" stroke="#4d6185" stroke-width="2"/></svg></div></div>
<div class="btn" style="left:187px;top:540px;width:239px;height:18px;line-height:16px">Next</div>
<div class="abs" style="left:185px;top:560px;width:241px;height:270px;background:#fff;border:1px solid #aca899"></div>
<div class="dark" style="left:186px;top:561px;width:223px;height:251px"><div class="t mono" style="left:1px;top:2px">0364ffcc 7c952149 ntdll!DbgUiRemoteBreakin+0x2d
0364ffd0 00000005
0364ffd4 00000004
0364ffd8 00000001
0364ffdc 0364ffd0
0364ffe0 00000000
0364ffe4 ffffffff
0364ffe8 7c90e920 ntdll!_except_handler3
0364ffec 7c952168 ntdll!`string'+0x98
0364fff0 00000000
0364fff4 00000000
0364fff8 00000000
0364fffc 00000000
03650000 ????????
03650004 ????????         nv up ei pl zr na pe nc
cs=001b  ss=0023  ds=0023  es=0023  fs=0038  gs=0000</div></div>
<div class="sb" style="left:409px;top:561px;width:17px;height:251px"><div class="sbb" style="left:0;top:0;width:17px"><svg width="9" height="6" style="left:3px;top:5px" viewBox="0 0 9 6"><path d="M1 5 L4.5 1.5 L8 5" fill="none" stroke="#4d6185" stroke-width="2"/></svg></div><div class="sbb" style="left:0;top:234px;width:17px"><svg width="9" height="6" style="left:3px;top:5px" viewBox="0 0 9 6"><path d="M1 1 L4.5 4.5 L8 1" fill="none" stroke="#4d6185" stroke-width="2"/></svg></div><div class="sbt" style="left:0;top:17px;width:17px;height:177px"><div class="abs" style="left:4px;top:84px;width:7px;height:1px;background:#eef4fe"></div><div class="abs" style="left:5px;top:85px;width:7px;height:1px;background:#8cb0f8"></div><div class="abs" style="left:4px;top:86px;width:7px;height:1px;background:#eef4fe"></div><div class="abs" style="left:5px;top:87px;width:7px;height:1px;background:#8cb0f8"></div><div class="abs" style="left:4px;top:88px;width:7px;height:1px;background:#eef4fe"></div><div class="abs" style="left:5px;top:89px;width:7px;height:1px;background:#8cb0f8"></div><div class="abs" style="left:4px;top:90px;width:7px;height:1px;background:#eef4fe"></div><div class="abs" style="left:5px;top:91px;width:7px;height:1px;background:#8cb0f8"></div></div></div>
<div class="sb" style="left:186px;top:812px;width:223px;height:17px"><div class="sbb" style="left:0;top:0;height:17px"><svg width="6" height="9" style="left:4px;top:3px" viewBox="0 0 6 9"><path d="M5 1 L1.5 4.5 L5 8" fill="none" stroke="#4d6185" stroke-width="2"/></svg></div><div class="sbb" style="left:206px;top:0;height:17px"><svg width="6" height="9" style="left:5px;top:3px" viewBox="0 0 6 9"><path d="M1 1 L4.5 4.5 L1 8" fill="none" stroke="#4d6185" stroke-width="2"/></svg></div><div class="sbt h" style="left:17px;top:0;width:72px;height:17px"><div class="abs" style="top:4px;left:32px;height:7px;width:1px;background:#eef4fe"></div><div class="abs" style="top:5px;left:33px;height:7px;width:1px;background:#8cb0f8"></div><div class="abs" style="top:4px;left:34px;height:7px;width:1px;background:#eef4fe"></div><div class="abs" style="top:5px;left:35px;height:7px;width:1px;background:#8cb0f8"></div><div class="abs" style="top:4px;left:36px;height:7px;width:1px;background:#eef4fe"></div><div class="abs" style="top:5px;left:37px;height:7px;width:1px;background:#8cb0f8"></div><div class="abs" style="top:4px;left:38px;height:7px;width:1px;background:#eef4fe"></div><div class="abs" style="top:5px;left:39px;height:7px;width:1px;background:#8cb0f8"></div></div></div>
<div class="abs" style="left:409px;top:812px;width:17px;height:17px;background:#ece9d8"></div><svg width="12" height="12" style="left:413px;top:816px" viewBox="0 0 12 12" shape-rendering="crispEdges"><g fill="#b8b4a2"><rect x="8" y="0" width="2" height="2"/><rect x="4" y="4" width="2" height="2"/><rect x="8" y="4" width="2" height="2"/><rect x="0" y="8" width="2" height="2"/><rect x="4" y="8" width="2" height="2"/><rect x="8" y="8" width="2" height="2"/></g><g fill="#fff"><rect x="9" y="1" width="2" height="2"/><rect x="5" y="5" width="2" height="2"/><rect x="9" y="5" width="2" height="2"/><rect x="1" y="9" width="2" height="2"/><rect x="5" y="9" width="2" height="2"/><rect x="9" y="9" width="2" height="2"/></g></svg>
<div class="abs" style="left:431px;top:471px;width:716px;height:359px;background:#ece9d8"></div>
<div class="ptitle in" style="left:431px;top:471px;width:716px;height:18px"><span>Command</span></div>
<div class="abs" style="left:1112px;top:473px;width:15px;height:12px;background:#fff;border:1px solid #000;border-top:2px solid #00007b"><svg width="13" height="9" style="left:0;top:0" viewBox="0 0 13 9"><path d="M2 2 L5 4.5 L2 7 M6 7.5 H11" stroke="#000" stroke-width="1.2" fill="none"/></svg></div>
<div class="abs" style="left:1132px;top:473px;width:13px;height:13px;background:linear-gradient(135deg,#bd6a80,#ad566c);border:1px solid #b9c6ee;border-radius:2px"><svg width="7" height="7" style="left:2px;top:2px" viewBox="0 0 7 7"><path d="M0.5 0.5 L6.5 6.5 M6.5 0.5 L0.5 6.5" stroke="#fff" stroke-width="2" fill="none"/></svg></div>
<div class="abs" style="left:431px;top:489px;width:716px;height:321px;background:#fff"></div><div class="abs" style="left:431px;top:489px;width:715px;height:1px;background:#aca899"></div><div class="abs" style="left:431px;top:490px;width:1px;height:319px;background:#aca899"></div><div class="abs" style="left:432px;top:490px;width:713px;height:1px;background:#716f64"></div><div class="abs" style="left:432px;top:490px;width:1px;height:318px;background:#716f64"></div>
<div class="abs" style="left:433px;top:491px;width:695px;height:1px;background:#1a1a1a"></div>
<div class="dark" style="left:433px;top:492px;width:695px;height:299px"><div class="t mono" style="left:1px;top:-4px">0:014&gt; d 05050505
05050505  90 90 90 90 90 90 90 90-90 90 90 90 90 90 90 90  <b>................</b>
05050515  90 90 90 90 90 90 90 90-90 90 90 90 90 90 90 90  <b>................</b>
05050525  90 90 90 90 90 90 90 90-90 90 90 90 90 90 90 90  <b>................</b>
05050535  90 90 90 90 90 90 90 90-90 90 90 90 90 90 90 90  <b>................</b>
05050545  90 90 90 90 90 90 90 90-90 90 90 90 90 90 90 90  <b>................</b>
05050555  90 90 90 90 90 90 90 90-90 90 90 90 90 90 90 90  <b>................</b>
05050565  90 90 90 90 90 90 90 90-90 90 90 90 90 90 90 90  <b>................</b>
05050575  90 90 90 90 90 90 90 90-90 90 90 90 90 90 90 90  <b>................</b>
0:014&gt; d 06060606
06060606  90 90 90 90 90 90 90 90-90 90 90 90 90 90 90 90  <b>................</b>
06060616  90 90 90 90 90 90 90 90-90 90 90 90 90 90 90 90  <b>................</b>
06060626  90 90 90 90 90 90 90 90-90 90 90 90 90 90 90 90  <b>................</b>
06060636  90 90 90 90 90 90 90 90-90 90 90 90 90 90 90 90  <b>................</b>
06060646  90 90 90 90 90 90 90 90-90 90 90 90 90 90 90 90  <b>................</b>
06060656  90 90 90 90 90 90 90 90-90 90 90 90 90 90 90 90  <b>................</b>
06060666  90 90 90 90 90 90 90 90-90 90 90 90 90 90 90 90  <b>................</b>
06060676  90 90 90 90 90 90 90 90-90 90 90 90 90 90 90 90  <b>................</b></div></div>
<div class="sb" style="left:1128px;top:491px;width:17px;height:300px"><div class="sbb" style="left:0;top:0;width:17px"><svg width="9" height="6" style="left:3px;top:5px" viewBox="0 0 9 6"><path d="M1 5 L4.5 1.5 L8 5" fill="none" stroke="#4d6185" stroke-width="2"/></svg></div><div class="sbb" style="left:0;top:283px;width:17px"><svg width="9" height="6" style="left:3px;top:5px" viewBox="0 0 9 6"><path d="M1 1 L4.5 4.5 L8 1" fill="none" stroke="#4d6185" stroke-width="2"/></svg></div><div class="sbt" style="left:0;top:276px;width:17px;height:7px"></div></div>
<div class="sb" style="left:433px;top:791px;width:695px;height:17px"><div class="sbb" style="left:0;top:0;height:17px"><svg width="6" height="9" style="left:4px;top:3px" viewBox="0 0 6 9"><path d="M5 1 L1.5 4.5 L5 8" fill="none" stroke="#4d6185" stroke-width="2"/></svg></div><div class="sbb" style="left:678px;top:0;height:17px"><svg width="6" height="9" style="left:5px;top:3px" viewBox="0 0 6 9"><path d="M1 1 L4.5 4.5 L1 8" fill="none" stroke="#4d6185" stroke-width="2"/></svg></div><div class="sbt h" style="left:17px;top:0;width:337px;height:17px"><div class="abs" style="top:4px;left:164px;height:7px;width:1px;background:#eef4fe"></div><div class="abs" style="top:5px;left:165px;height:7px;width:1px;background:#8cb0f8"></div><div class="abs" style="top:4px;left:166px;height:7px;width:1px;background:#eef4fe"></div><div class="abs" style="top:5px;left:167px;height:7px;width:1px;background:#8cb0f8"></div><div class="abs" style="top:4px;left:168px;height:7px;width:1px;background:#eef4fe"></div><div class="abs" style="top:5px;left:169px;height:7px;width:1px;background:#8cb0f8"></div><div class="abs" style="top:4px;left:170px;height:7px;width:1px;background:#eef4fe"></div><div class="abs" style="top:5px;left:171px;height:7px;width:1px;background:#8cb0f8"></div></div></div>
<div class="abs" style="left:1128px;top:791px;width:17px;height:17px;background:#ece9d8"></div>
<div class="abs" style="left:431px;top:810px;width:716px;height:3px;background:#d4d0c8"></div>
<div class="abs" style="left:431px;top:813px;width:716px;height:18px;background:#fff"></div>
<div class="abs" style="left:431px;top:813px;width:56px;height:17px;background:#ece9d8;border:1px solid;border-color:#716f64 #fff #fff #aca899"><div class="mono" style="position:absolute;left:1px;top:1px;color:#000">0:014&gt;</div></div>
<div class="abs" style="left:488px;top:813px;width:641px;height:16px;background:#1a1a1a;border-top:1px solid #716f64;border-left:1px solid #716f64"></div>
<div class="abs" style="left:1129px;top:814px;width:16px;height:15px;background:#f4f3ee"><div class="abs" style="left:0;top:0px;width:16px;height:7px;background:linear-gradient(#cfdcfd,#b7cbf8);border:1px solid #fff;border-bottom-color:#9cb3e6;border-radius:2px"><svg width="5" height="3" style="left:5px;top:1px" viewBox="0 0 5 3"><path d="M0 3L2.5 0L5 3Z" fill="#4d6185"/></svg></div><div class="abs" style="left:0;top:8px;width:16px;height:7px;background:linear-gradient(#cfdcfd,#b7cbf8);border:1px solid #fff;border-bottom-color:#9cb3e6;border-radius:2px"><svg width="5" height="3" style="left:5px;top:1px" viewBox="0 0 5 3"><path d="M0 0L2.5 3L5 0Z" fill="#4d6185"/></svg></div></div>
<div class="abs" id="taskbar" style="left:0;top:834px;width:1152px;height:30px;background:linear-gradient(#3168d5 0,#4993e6 4%,#3a80e1 9%,#2a6ede 16%,#245ddb 30%,#245ddb 70%,#2663e0 85%,#1f51c8 95%,#1941a5 100%)"></div>
<div class="abs" style="left:0;top:834px;width:96px;height:30px;border-radius:0 11px 13px 0/0 14px 16px 0;background:linear-gradient(#236c23 0,#3a963a 1.500px,#4dab4d 3px,#49a649 5px,#3c963c 8px,#3a923a 20px,#3f9e3f 24px,#44a844 27px,#358c35 29px,#2a742a 30px);box-shadow:inset 2px 0 3px -1px #1e5a1e,inset -3px 0 4px -1px #2a742a,1px 0 1px rgba(10,30,90,.5)"></div>
<div class="abs" style="left:34px;top:838px;font-size:18px;line-height:22px;font-weight:bold;font-style:italic;color:#fff;text-shadow:1px 1px 1px #1d4d12,1px 2px 2px #2a5a1a;letter-spacing:-0.5px">start</div>
<svg width="21" height="19" style="left:10px;top:839px" viewBox="0 0 18 16"><path d="M2 2 Q5 0 8 2 L7 7 Q4 5 1 7Z" fill="#e8532a"/><path d="M9.5 2.3 Q13 4 16 2 L15 7 Q12 9 8.5 7.2Z" fill="#7cc242"/><path d="M0.8 8.3 Q4 6 6.8 8.2 L5.8 13 Q3 11 0 13Z" fill="#3b8be8"/><path d="M8.2 8.6 Q11.5 10.5 14.8 8.4 L13.8 13.2 Q10.5 15 7.2 13.4Z" fill="#fbc322"/></svg>
<div class="abs" style="left:107px;top:837px;width:158px;height:25px;border-radius:3px;background:linear-gradient(#5a9af0 0,#3f83ea 12%,#3c7fe8 80%,#346fd8);border:1px solid #2c62c8;box-shadow:inset 1px 1px 0 #6aa6f4"></div>
<div class="abs" style="left:136px;top:842px;font-size:11px;line-height:14px;color:#fff;white-space:nowrap;letter-spacing:-0.08px">C:\Documents and Se...</div>
<svg width="16" height="16" style="left:116px;top:841px" viewBox="0 0 16 16"><rect x="2" y="2" width="11" height="13" fill="#f4f4e8" stroke="#2a5a2a"/><path d="M4 6H11M4 8H11M4 10H11M4 12H9" stroke="#6a8a6a"/><rect x="2" y="1" width="11" height="3" fill="#3a8a3a"/><path d="M13 1 L9 8" stroke="#d04020" stroke-width="1.5"/></svg>
<div class="abs" style="left:267px;top:837px;width:158px;height:25px;border-radius:3px;background:linear-gradient(#5a9af0 0,#3f83ea 12%,#3c7fe8 80%,#346fd8);border:1px solid #2c62c8;box-shadow:inset 1px 1px 0 #6aa6f4"></div>
<div class="abs" style="left:296px;top:842px;font-size:11px;line-height:14px;color:#fff;white-space:nowrap;letter-spacing:-0.08px">C:\Documents and Se...</div>
<svg width="16" height="16" style="left:276px;top:841px" viewBox="0 0 16 16"><path d="M1 3 H6 L7 5 H14 V13 H1Z" fill="#e8c850" stroke="#8a6a10"/><path d="M1 13 L3 7 H15.5 L14 13Z" fill="#f8e088" stroke="#8a6a10"/></svg>
<div class="abs" style="left:427px;top:837px;width:158px;height:25px;border-radius:3px;background:linear-gradient(#5a9af0 0,#3f83ea 12%,#3c7fe8 80%,#346fd8);border:1px solid #2c62c8;box-shadow:inset 1px 1px 0 #6aa6f4"></div>
<div class="abs" style="left:456px;top:842px;font-size:11px;line-height:14px;color:#fff;white-space:nowrap;letter-spacing:-0.08px">C:\Documents and Se...</div>
<svg width="16" height="16" style="left:436px;top:841px" viewBox="0 0 16 16"><circle cx="8.500" cy="8.500" r="5" fill="none" stroke="#5ab4ff" stroke-width="3"/><path d="M4 8.500H14" stroke="#5ab4ff" stroke-width="2.200"/><path d="M10 10H15V13H10Z" fill="#3c7fe8"/><path d="M1 14Q2 4 15 1.500" fill="none" stroke="#f4c430" stroke-width="1.600"/></svg>
<div class="abs" style="left:587px;top:837px;width:158px;height:25px;border-radius:3px;background:linear-gradient(#1b4bb0,#1e52c2 20%,#2158cc);box-shadow:inset 1px 1px 2px #10318a;border:1px solid #153c9c"></div>
<div class="abs" style="left:616px;top:842px;font-size:11px;line-height:14px;color:#fff;white-space:nowrap;letter-spacing:-0.08px">Pid 2252 - WinDbg:6....</div>
<svg width="16" height="16" style="left:596px;top:841px" viewBox="0 0 16 16"><rect x="3" y="1" width="12" height="10" fill="#d8d8d0" stroke="#404040"/><rect x="5" y="3" width="8" height="6" fill="#101020"/><path d="M7 12H11V14H7Z M5 14.5H13" stroke="#404040" fill="#c0c0c0"/><circle cx="4" cy="6" r="3" fill="#20d8e8" stroke="#208090"/><path d="M6 9L10 14" stroke="#2040c0" stroke-width="1.5"/></svg>
<div class="abs" style="left:1005px;top:834px;width:147px;height:30px;background:linear-gradient(#0c59b9 0,#19b0f0 6%,#16a0ea 12%,#1294e4 30%,#1290e2 70%,#139ae8 88%,#0d72c8 100%);border-left:1px solid #0a3a8a;box-shadow:inset 1px 0 0 #3ac0f8"></div>
<div class="abs" style="left:970px;top:841px;width:16px;height:16px;background:#4a72d8"></div><div class="abs" style="left:971px;top:843px;font-size:11px;line-height:13px;color:#fff">EN</div>
<div class="abs" style="left:1018px;top:843px;width:12px;height:12px;background:#6a6a6a"></div>
<div class="abs" style="left:1040px;top:846px;width:8px;height:8px;border-radius:4px;background:#e02020;border:1px solid #fff"></div>
<div class="abs" style="left:1056px;top:842px;width:10px;height:12px;background:#8a8a8a"></div>
<div class="abs" style="left:1071px;top:841px;width:14px;height:15px;background:#c82838"></div>
<div class="abs" style="left:1097px;top:843px;font-size:11px;line-height:13px;color:#fff;white-space:nowrap">9:18 PM</div>
<div class="abs" style="left:982px;top:834px;font-family:'Liberation Sans','Noto Sans CJK SC',sans-serif;font-size:14px;line-height:22px;color:#fff;white-space:nowrap;text-shadow:1px 1px 0 #000,2px 2px 1px #111,1px 0 0 #222,0 1px 0 #222">安全客<span style="font-size:14.75px"> ( bobao.360.cn )</span></div>
</body></html>
